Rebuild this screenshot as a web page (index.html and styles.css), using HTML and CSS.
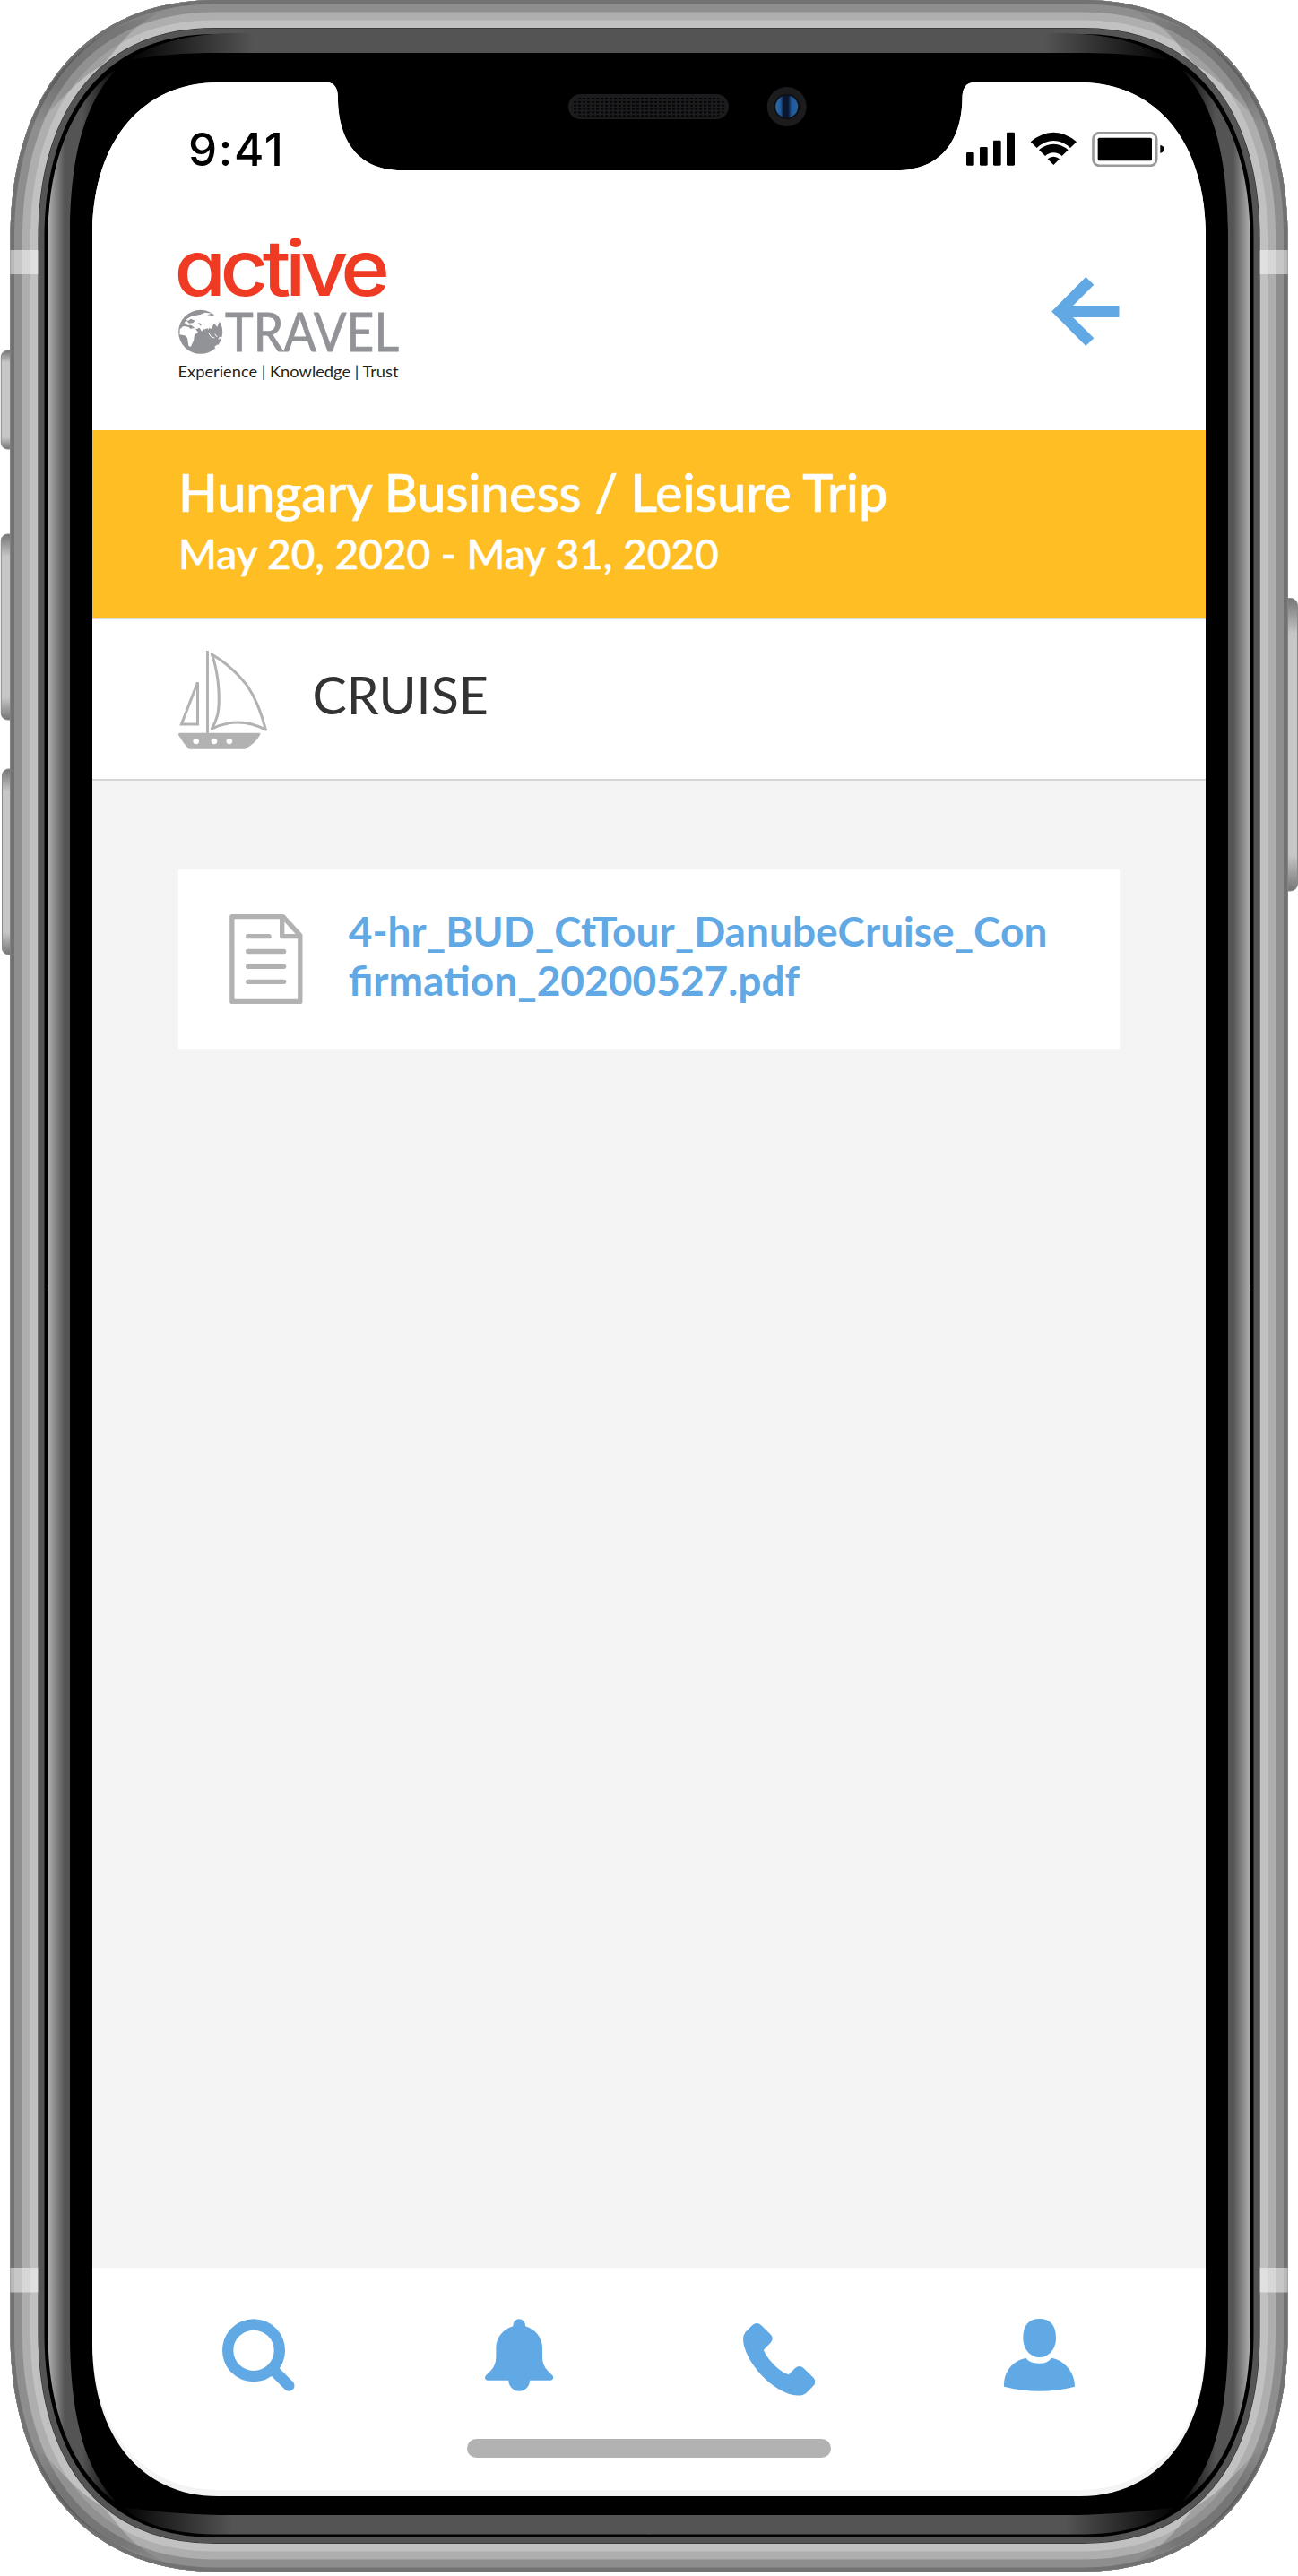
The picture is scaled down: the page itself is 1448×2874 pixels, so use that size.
FILE: index.html
```html
<!DOCTYPE html>
<html lang="en">
<head>
<meta charset="utf-8">
<title>Active Travel</title>
<link rel="stylesheet" href="styles.css">
</head>
<body>
<div class="phone">
  <svg class="frame" viewBox="0 0 1448 2874" aria-hidden="true">
    <defs>
      <path id="body" d="M11.5 265C11.5 105 95 0 240 0H1208C1353 0 1436.500 105 1436.500 265V2604C1436.500 2764 1353 2869 1208 2869H240C95 2869 11.500 2764 11.500 2604Z"/>
      <clipPath id="bodyClip"><use href="#body"/></clipPath>
      <linearGradient id="button" x1="0" y1="0" x2="0" y2="1">
        <stop offset="0" stop-color="#757575"/><stop offset=".12" stop-color="#c6c6c6"/><stop offset=".88" stop-color="#c6c6c6"/><stop offset="1" stop-color="#757575"/>
      </linearGradient>
      <linearGradient id="side" gradientUnits="userSpaceOnUse" x1="53.500" y1="0" x2="132" y2="0">
        <stop offset="0" stop-color="#b0b0b0"/><stop offset=".24" stop-color="#545454"/><stop offset=".48" stop-color="#545454"/><stop offset="1" stop-color="#000"/>
      </linearGradient>
      <linearGradient id="edge" gradientUnits="userSpaceOnUse" x1="142" y1="0" x2="283" y2="0">
        <stop offset="0" stop-color="#000"/><stop offset="1" stop-color="#545454"/>
      </linearGradient>
      <linearGradient id="edgeBottom" gradientUnits="userSpaceOnUse" x1="135" y1="0" x2="260" y2="0">
        <stop offset="0" stop-color="#000"/><stop offset="1" stop-color="#545454"/>
      </linearGradient>
      <linearGradient id="shade" gradientUnits="userSpaceOnUse" x1="37" y1="140" x2="180" y2="13">
        <stop offset="0" stop-color="#000" stop-opacity="0"/><stop offset=".25" stop-color="#000" stop-opacity=".17"/><stop offset=".75" stop-color="#000" stop-opacity=".17"/><stop offset="1" stop-color="#000" stop-opacity=".04"/>
      </linearGradient>
      <linearGradient id="lens" x1="0" y1="0" x2="1" y2="0">
        <stop offset="0" stop-color="#2c6bab"/><stop offset=".22" stop-color="#235b9a"/><stop offset=".36" stop-color="#0a1630"/><stop offset=".56" stop-color="#0a1630"/><stop offset=".72" stop-color="#225a97"/><stop offset="1" stop-color="#2461a4"/>
      </linearGradient>
      <pattern id="mesh" x="640" y="109" width="5" height="3.870" patternUnits="userSpaceOnUse">
        <rect width="3.200" height="1.800" fill="#030303"/>
      </pattern>
      <g id="rail">
        <path d="M53.500 1436V265C53.500 190 75 115 132 75C100 108 78 160 78 265V1436Z" fill="url(#side)"/>
        <path d="M30 150C55 80 95 35 185 10C135 35 130 60 112 74C85 90 75 105 30 150Z" fill="url(#shade)" clip-path="url(#bodyClip)"/>
      </g>
    </defs>
    <rect x="1.300" y="391" width="20" height="110" rx="7" fill="url(#button)" stroke="#8a8a8a"/>
    <rect x="1.300" y="596" width="20" height="207" rx="7" fill="url(#button)" stroke="#8a8a8a"/>
    <rect x="2.500" y="858" width="20" height="207" rx="7" fill="url(#button)" stroke="#8a8a8a"/>
    <rect x="1427" y="667.500" width="20.500" height="326.500" rx="8" fill="url(#button)" stroke="#8a8a8a"/>
    <g clip-path="url(#bodyClip)" stroke-linejoin="round">
      <use href="#body" fill="#000" stroke="#545454" stroke-width="76"/>
      <use href="#body" fill="none" stroke="#222" stroke-width="63"/>
      <use href="#body" fill="none" stroke="#c1c1c1" stroke-width="62"/>
      <use href="#body" fill="none" stroke="#aeaeae" stroke-width="45"/>
      <use href="#body" fill="none" stroke="#8e8e8e" stroke-width="27"/>
      <use href="#body" fill="none" stroke="#727272" stroke-width="9"/>
    </g>
    <use href="#rail"/>
    <use href="#rail" transform="translate(1448 0) scale(-1 1)"/>
    <use href="#rail" transform="translate(0 2869) scale(1 -1)"/>
    <use href="#rail" transform="translate(1448 2869) scale(-1 -1)"/>
    <path d="M11.500 279H42.500V306H11.500ZM1405.500 279H1436.500V306H1405.500ZM11.500 2530H42.500V2557.500H11.500ZM1405.500 2530H1436.500V2557.500H1405.500Z" fill="#fff" opacity=".5"/>
    <path id="topEdge" d="M725 37H260C215 38 175 46 142 68C175 61 205 59 245 59H725Z" fill="url(#edge)"/>
    <use href="#topEdge" transform="translate(1448 0) scale(-1 1)"/>
    <path id="bottomEdge" d="M725 2806H245C200 2805 165 2801 135 2797C165 2820 200 2827.500 245 2827.500H725Z" fill="url(#edgeBottom)"/>
    <use href="#bottomEdge" transform="translate(1448 0) scale(-1 1)"/>
    <rect x="634" y="105" width="179" height="28" rx="14" fill="#1c1c1e"/>
    <rect x="638" y="109" width="171" height="21" rx="9" fill="url(#mesh)"/>
    <circle cx="877.700" cy="119" r="22" fill="#1c1c1e"/>
    <circle cx="877.700" cy="119" r="14.300" fill="#0e1012"/>
    <circle cx="877.700" cy="119" r="12.500" fill="url(#lens)"/>
  </svg>

  <div class="screen">
    <div class="status">
      <span class="time">9:41</span>
      <svg class="indicators" viewBox="150 441 663 116">
        <rect x="150" y="510" width="26" height="44" rx="4"/><rect x="195" y="492" width="26" height="62" rx="4"/><rect x="240" y="470" width="26" height="84" rx="4"/><rect x="285" y="443" width="27" height="111" rx="4"/>
        <path d="M365 475Q400 443 442 443T519 475L498 495Q472 471 442 471T386 495ZM393 502Q415 482 442 482T491 502L470 522Q457 511 442 511T414 522ZM422 532Q431 524 442 524T462 532L442 552Z"/>
        <rect x="574.500" y="444.500" width="212" height="110" rx="21" fill="none" stroke="#999" stroke-width="8"/>
        <rect x="590" y="461" width="181" height="77" rx="5"/><path d="M799 485Q813 490 813 499T799 513Z"/>
      </svg>
    </div>
    <header class="header">
      <svg class="logo" viewBox="198 265 252 165" role="img" aria-label="Active Travel">
        <text class="logo-active" x="194.500" y="330" textLength="234" lengthAdjust="spacingAndGlyphs">active</text>
        <text class="logo-travel" x="251" y="391.700" textLength="194" lengthAdjust="spacingAndGlyphs">TRAVEL</text>
        <text class="logo-tag" x="198.500" y="420.700" textLength="246" lengthAdjust="spacingAndGlyphs">Experience | Knowledge | Trust</text>
        <g transform="translate(180 250) scale(.33333)">
          <circle cx="131" cy="361" r="73.500" fill="#929397"/>
          <path fill="#fff" d="M62 352L73 342L91 344L97 350L112 348L123 362L111 371L108 391L98 411L91 407L87 381L78 373L61 370ZM77 331L86 317L101 308L130 303L146 296L170 299L153 304L171 307L185 300L194 317L202 335L194 327L187 345L177 332L166 351L160 347L152 364L144 350L135 359L128 347L116 352L100 338L87 338ZM194 377L205 379L190 387ZM178 410L188 403L190 408L181 416Z"/>
          <path fill="#929397" d="M83 321L91 323L98 317L113 323L106 331L92 332ZM122 330L135 334L132 341ZM146 352L155 349L162 368L153 376ZM165 355L174 344L184 361L175 372ZM188 341L198 337L205 365L193 369Z"/>
          <path fill="none" stroke="#fff" stroke-width="3" d="M158 363L166 377L178 381M179 368L187 378"/>
        </g>
      </svg>
      <svg class="back" viewBox="1174 308 76 79"><path fill="#61a9e5" d="M1174.200 347.500L1212.300 309L1221.300 317.800L1198 341H1249.500V354H1198L1221.300 377.200L1212.300 386Z"/></svg>
    </header>
    <section class="trip">
      <h1 class="trip-name">Hungary Business / Leisure Trip</h1>
      <p class="trip-dates">May 20, 2020 - May 31, 2020</p>
    </section>
    <section class="category">
      <svg class="boat" viewBox="57 105 299 331" fill="none" stroke="#b2b2b2" stroke-width="9">
        <path d="M154.500 105V384"/><path d="M121.500 211V352H67Z"/>
        <path stroke-linejoin="round" d="M169 117C230 153 267 194 291 227C320 270 337 320 350 370C292 340 230 337 169 367C188 334 193 310 193 265C193 210 182 150 169 117Z"/>
        <path fill="#b2b2b2" stroke="none" fill-rule="evenodd" d="M61 381H328Q334 381 330 389Q315 415 281 435H92Q73 416 57 388Q56 381 61 381ZM116 399a10 10 0 1 0 .1 0ZM177 399a10 10 0 1 0 .1 0ZM228 399a10 10 0 1 0 .1 0Z"/>
      </svg>
      <h2 class="category-name">CRUISE</h2>
    </section>
    <main class="content">
      <a class="file">
        <svg class="doc" viewBox="79 180 245 301" fill="none" stroke="#b2b2b2" stroke-width="16" stroke-linejoin="round" stroke-linecap="round">
          <path d="M87.500 188H258L315.500 251V472.500H87.500ZM255 192V254H313M141 254H211M141 304.500H261M141 355H261M141 406H261"/>
        </svg>
        <span class="file-name">4-hr_BUD_CtTour_DanubeCruise_Con<br>firmation_20200527.pdf</span>
      </a>
    </main>
    <nav class="tabs">
      <div class="tab-row">
        <a class="tab"><svg viewBox="146 141 242 243"><circle cx="251" cy="247" r="86.500" fill="none" stroke="#61a9e5" stroke-width="37"/><path d="M318 314L369 365" stroke="#61a9e5" stroke-width="37" stroke-linecap="round"/></svg></a>
        <a class="tab"><svg viewBox="1017 141 242 243"><path fill="#61a9e5" d="M1117 166V162A20.500 20.500 0 0 1 1158 162V166C1191 175 1215 204 1215 239V269C1215 287 1221 302 1233 315L1249 331C1255 338 1250 347 1243 347H1173A35.500 36 0 0 1 1102 347H1032C1024 347 1020 338 1026 331L1042 315C1054 302 1060 287 1060 269V239C1060 204 1084 175 1117 166Z"/></svg></a>
        <a class="tab tab-call"><svg viewBox="147 156 243 243"><path fill="#61a9e5" d="M155 185L177 163Q193 149 208 162L240 194Q251 207 240 220L216 245C227 275 268 318 300 328L321 307Q336 294 350 306L384 339Q394 352 384 365L361 388Q349 399 330 398C247 393 151 284 147 211Q147 195 155 185Z"/></svg></a>
        <a class="tab"><svg viewBox="1017 141 242 243"><path fill="#61a9e5" d="M1139 141C1174 141 1194 161 1194 206C1194 243 1169 270 1139 270S1084 243 1084 206C1084 161 1104 141 1139 141ZM1094 273Q1104 290 1137 290T1178 272C1220 279 1257 317 1257 368Q1200 383 1139 383T1020 368C1018 317 1051 280 1094 273Z"/></svg></a>
      </div>
      <div class="home-indicator"></div>
    </nav>
  </div>
</div>
</body>
</html>
```
FILE: styles.css
```css
* { box-sizing: border-box; }

body {
  margin: 0;
  background: #fff;
  font-family: Lato, Carlito, sans-serif;
}

.phone {
  position: relative;
  display: flow-root;
  width: 1448px;
  height: 2874px;
  overflow: hidden;
}

.frame {
  position: absolute;
  inset: 0;
  width: 1448px;
  height: 2874px;
}

.screen {
  position: relative;
  display: flex;
  flex-direction: column;
  width: 1242px;
  height: 2693px;
  margin: 92px 0 0 103px;
  background: #f4f4f4;
  clip-path: path("M0 170C0 68 54 0 140 0H261C271 0 274 7 274 18C274 58 292 98 345 98H897C952 98 970 58 970.5 18C970.5 7 974 0 984 0H1102C1188 0 1242 68 1242 170V2523C1242 2625 1188 2693 1102 2693H140C54 2693 0 2625 0 2523Z");
}

.status {
  display: flex;
  flex: none;
  justify-content: space-between;
  align-items: flex-start;
  height: 173px;
  padding: 45px 46px 0 107px;
  background: #fff;
}

.time {
  font: 500 51px/60px Inter, sans-serif;
  letter-spacing: 1.7px;
}

.indicators {
  width: 221px;
  height: 38.7px;
  margin-top: 10px;
}

.header {
  display: flex;
  flex: none;
  justify-content: space-between;
  align-items: flex-start;
  height: 215px;
  padding: 0 96px 0 95px;
  background: #fff;
}

.logo {
  width: 252px;
  height: 165px;
  overflow: visible;
}

.logo-active {
  fill: #ef3b24;
  font: 500 86px Inter, sans-serif;
  font-feature-settings: "cv11" 1;
  letter-spacing: -6px;
}

.logo-travel {
  fill: #929397;
  stroke: #929397;
  stroke-width: 0.8px;
  font: 400 59.5px Lato, sans-serif;
}

.logo-tag {
  fill: #231f20;
  font: 400 17px Lato, sans-serif;
}

.back {
  width: 76px;
  height: 79px;
  margin-top: 43px;
}

.trip {
  flex: none;
  height: 210px;
  padding: 33.5px 96px 0;
  background: #ffbe23;
  color: #fff;
}

.trip-name {
  margin: 0 0 6.5px;
  font-size: 57.3px;
  font-weight: 500;
  line-height: 70px;
  -webkit-text-stroke: 0.7px #fff;
}

.trip-dates {
  margin: 0;
  font-size: 46px;
  font-weight: 500;
  line-height: 56px;
  -webkit-text-stroke: 0.6px #fff;
}

.category {
  display: flex;
  flex: none;
  align-items: flex-start;
  gap: 50px;
  height: 181px;
  padding: 35px 96px 0;
  background: #fff;
  border-top: 1px solid #d9d9d9;
  border-bottom: 2px solid #d6d6d6;
}

.boat {
  width: 99.5px;
  height: 110px;
}

.category-name {
  margin: 14.5px 0 0;
  color: #333;
  font-size: 57.3px;
  font-weight: 400;
  line-height: 68px;
}

.content {
  flex: none;
  height: 1659px;
  padding: 99px 96px 0 95.5px;
}

.file {
  display: flex;
  align-items: flex-start;
  gap: 51px;
  height: 200px;
  padding: 41px 57.5px 0;
  background: #fff;
}

.doc {
  flex: none;
  width: 81.7px;
  height: 100.3px;
  margin-top: 9px;
}

.file-name {
  color: #61a9e5;
  font-size: 46.05px;
  font-weight: 700;
  line-height: 55.4px;
  white-space: nowrap;
}

.tabs {
  flex: none;
  height: 248px;
  padding: 57px 40.7px 0;
  background: #fff;
  clip-path: path("M0 0H1242V78C1242 180 1188 248 1102 248H140C54 248 0 180 0 78Z");
}

.tab-row {
  display: grid;
  grid-template-columns: repeat(4, 1fr);
  height: 133.5px;
}

.tab {
  display: flex;
  justify-content: center;
  align-items: flex-start;
}

.tab svg {
  width: 80.7px;
  height: 81px;
}

.tab-call { padding-top: 5px; }

.home-indicator {
  width: 406px;
  height: 21.5px;
  margin: 0 auto;
  border-radius: 11px;
  background: #b2b2b2;
}
```
